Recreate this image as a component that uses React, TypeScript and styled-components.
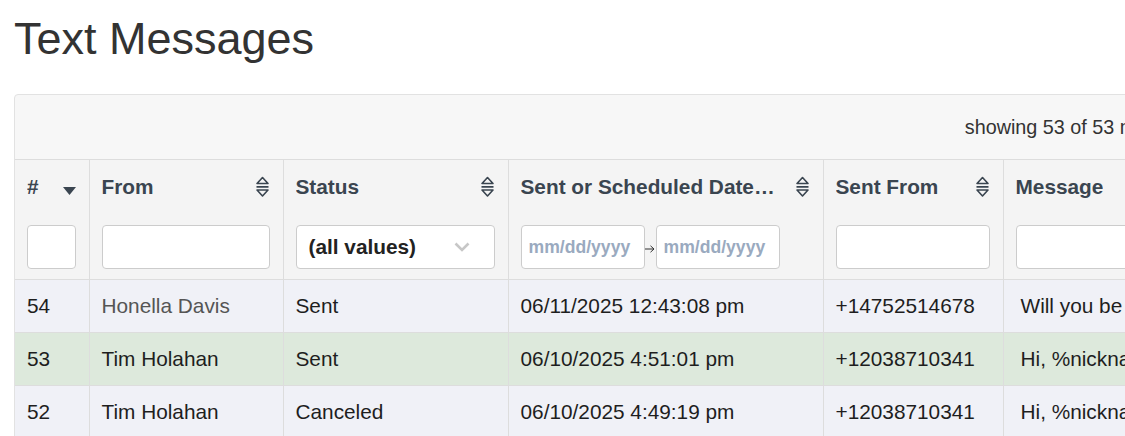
import styled, { createGlobalStyle } from 'styled-components'

const GlobalStyle = createGlobalStyle`
  html, body {
    margin: 0;
    padding: 0;
    background: #ffffff;
    overflow: hidden;
  }
  body {
    font-family: 'Liberation Sans', Arial, sans-serif;
    color: #222;
  }
`

const Page = styled.div`
  padding: 0 14px;
  width: 1300px;
`

const Title = styled.h1`
  margin: 15px 0 31px;
  font-size: 45px;
  line-height: 48px;
  font-weight: 400;
  color: #333;
`

const Panel = styled.div`
  width: 1215px;
  border: 1px solid #e2e2e2;
  border-radius: 4px;
  background: #f7f7f7;
  overflow: hidden;
`

const Toolbar = styled.div`
  display: flex;
  justify-content: flex-end;
  align-items: center;
  height: 64px;
  padding: 0 20px;
  border-bottom: 1px solid #dddddd;
  font-size: 19.8px;
  color: #333;
`

const Table = styled.table`
  border-collapse: collapse;
  table-layout: fixed;
  width: 100%;
`

const HeadCell = styled.th`
  background: #f4f4f4;
  border-left: 1px solid #dddddd;
  border-bottom: 1px solid #dddddd;
  padding: 14px 13px 10px 12px;
  text-align: left;
  vertical-align: top;
  &:first-child {
    border-left: none;
  }
`

const HeadLine = styled.div`
  display: flex;
  align-items: center;
  justify-content: space-between;
  gap: 16px;
  height: 26px;
  margin-bottom: 25px;
`

const HeadLabel = styled.span`
  font-size: 20.8px;
  font-weight: 700;
  color: #3a4550;
  white-space: nowrap;
  overflow: hidden;
  text-overflow: ellipsis;
`

const TextFilter = styled.input`
  box-sizing: border-box;
  width: 100%;
  height: 44px;
  border: 1px solid #cccccc;
  border-radius: 4px;
  background: #fff;
  display: block;
`

const SelectBox = styled.div`
  box-sizing: border-box;
  width: 100%;
  height: 44px;
  border: 1px solid #cccccc;
  border-radius: 4px;
  background: #fff;
  display: flex;
  align-items: center;
  justify-content: space-between;
  padding: 0 24px 0 12px;
  font-size: 20.8px;
  font-weight: 700;
  color: #222;
`

const DateRange = styled.div`
  display: flex;
  align-items: center;
`

const DateBox = styled.div`
  box-sizing: border-box;
  width: 124px;
  height: 44px;
  border: 1px solid #cccccc;
  border-radius: 4px;
  background: #fff;
  display: flex;
  align-items: center;
  padding-left: 7px;
  font-size: 17.6px;
  font-weight: 700;
  color: #9aaabf;
  white-space: nowrap;
  overflow: hidden;
`

const RangeArrow = styled.span`
  width: 11px;
  display: flex;
  justify-content: center;
  padding-top: 4px;
`

const Row = styled.tr<{ tone: 'plain' | 'green' }>`
  background: ${({ tone }) => (tone === 'green' ? '#dde9dc' : '#f0f1f7')};
`

const Cell = styled.td<{ muted?: boolean; wide?: boolean }>`
  height: 52px;
  padding: 0 12px;
  padding-left: ${({ wide }) => (wide ? '17px' : '12px')};
  border-left: 1px solid #dddddd;
  border-bottom: 1px solid #dddddd;
  font-size: 20.8px;
  color: ${({ muted }) => (muted ? '#555555' : '#1e1e1e')};
  white-space: nowrap;
  overflow: hidden;
  &:first-child {
    border-left: none;
  }
`

const SortIcon = () => (
  <svg width="15" height="22" viewBox="0 0 15 22" style={{ flex: 'none' }}>
    <path d="M7.5 1.5 L13 7.5 H2 Z" fill="none" stroke="#3a4550" strokeWidth="1.6" strokeLinejoin="round" />
    <path d="M1.5 10.8 H13.5" stroke="#3a4550" strokeWidth="1.8" />
    <path d="M2 14 H13 L7.5 20 Z" fill="none" stroke="#3a4550" strokeWidth="1.6" strokeLinejoin="round" />
  </svg>
)

const SortDown = () => (
  <svg width="13" height="8" viewBox="0 0 13 8" style={{ flex: 'none', marginTop: 8 }}>
    <path d="M0 0 H13 L6.5 8 Z" fill="#3a4550" />
  </svg>
)

const Chevron = () => (
  <svg width="16" height="10" viewBox="0 0 16 10">
    <path d="M1.5 1.5 L8 8 L14.5 1.5" fill="none" stroke="#c7c7c7" strokeWidth="2.6" />
  </svg>
)

const columns = [74, 194, 225, 315, 180, 227]

const rows = [
  { id: 54, from: 'Honella Davis', status: 'Sent', date: '06/11/2025 12:43:08 pm', phone: '+14752514678', msg: 'Will you be able to make it on Thursday?', tone: 'plain' as const, muted: true },
  { id: 53, from: 'Tim Holahan', status: 'Sent', date: '06/10/2025 4:51:01 pm', phone: '+12038710341', msg: 'Hi, %nickname%, just checking in', tone: 'green' as const, muted: false },
  { id: 52, from: 'Tim Holahan', status: 'Canceled', date: '06/10/2025 4:49:19 pm', phone: '+12038710341', msg: 'Hi, %nickname%, just checking in', tone: 'plain' as const, muted: false },
]

const App = () => {
  return (
    <Page>
      <GlobalStyle />
      <Title>Text Messages</Title>
      <Panel>
        <Toolbar>showing 53 of 53 messages</Toolbar>
        <Table>
          <colgroup>
            {columns.map((w, i) => (
              <col key={i} style={{ width: w }} />
            ))}
          </colgroup>
          <thead>
            <tr>
              <HeadCell>
                <HeadLine>
                  <HeadLabel>#</HeadLabel>
                  <SortDown />
                </HeadLine>
                <TextFilter />
              </HeadCell>
              <HeadCell>
                <HeadLine>
                  <HeadLabel>From</HeadLabel>
                  <SortIcon />
                </HeadLine>
                <TextFilter />
              </HeadCell>
              <HeadCell>
                <HeadLine>
                  <HeadLabel>Status</HeadLabel>
                  <SortIcon />
                </HeadLine>
                <SelectBox>
                  (all values)
                  <Chevron />
                </SelectBox>
              </HeadCell>
              <HeadCell>
                <HeadLine>
                  <HeadLabel>Sent or Scheduled Date/Time</HeadLabel>
                  <SortIcon />
                </HeadLine>
                <DateRange>
                  <DateBox>mm/dd/yyyy</DateBox>
                  <RangeArrow>
                    <svg width="10" height="8" viewBox="0 0 10 8">
                      <path d="M0 4 H9 M5.5 0.8 L9 4 L5.5 7.2" fill="none" stroke="#333" strokeWidth="1" />
                    </svg>
                  </RangeArrow>
                  <DateBox>mm/dd/yyyy</DateBox>
                </DateRange>
              </HeadCell>
              <HeadCell>
                <HeadLine>
                  <HeadLabel>Sent From</HeadLabel>
                  <SortIcon />
                </HeadLine>
                <TextFilter />
              </HeadCell>
              <HeadCell>
                <HeadLine>
                  <HeadLabel>Message</HeadLabel>
                </HeadLine>
                <TextFilter />
              </HeadCell>
            </tr>
          </thead>
          <tbody>
            {rows.map((r) => (
              <Row key={r.id} tone={r.tone}>
                <Cell>{r.id}</Cell>
                <Cell muted={r.muted}>{r.from}</Cell>
                <Cell>{r.status}</Cell>
                <Cell>{r.date}</Cell>
                <Cell>{r.phone}</Cell>
                <Cell wide>{r.msg}</Cell>
              </Row>
            ))}
          </tbody>
        </Table>
      </Panel>
    </Page>
  )
}

export default App
